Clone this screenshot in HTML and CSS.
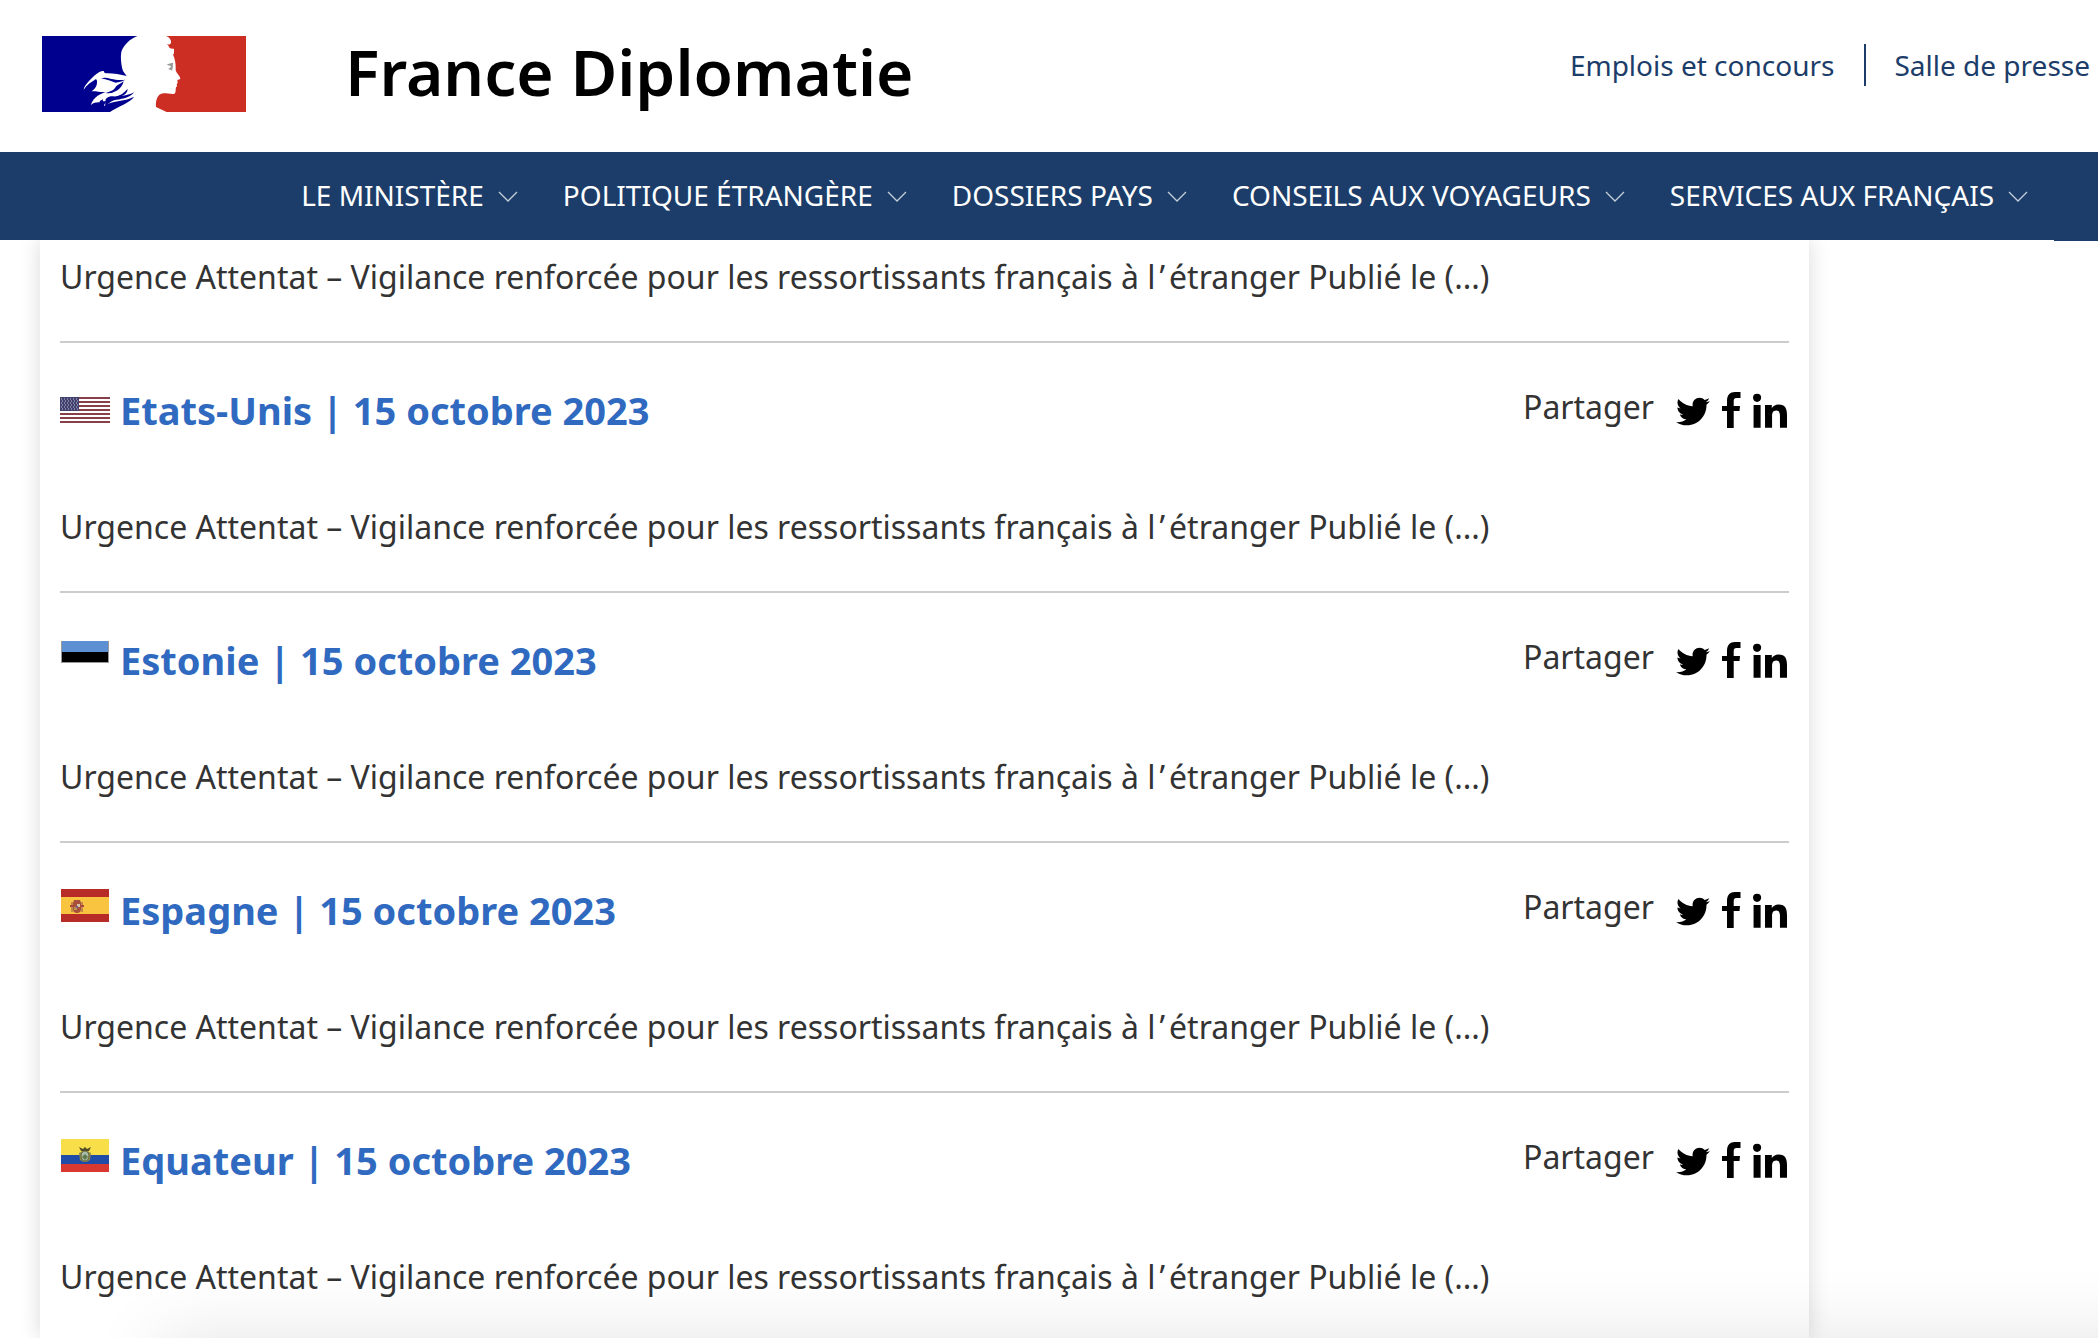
FILE: index.html
```html
<!DOCTYPE html>
<html lang="fr">
<head>
<meta charset="utf-8">
<meta name="viewport" content="width=device-width, initial-scale=1">
<title>France Diplomatie</title>
<link rel="stylesheet" href="styles.css">
</head>
<body>
<svg class="sprite" aria-hidden="true">
  <symbol id="chevron" viewBox="0 0 20 12"><path d="M1 1l9 9 9-9" fill="none" stroke="currentColor" stroke-width="1.3"/></symbol>
  <symbol id="twitter" viewBox="0 -40 512 544"><path d="M459.37 151.716c.325 4.548.325 9.097.325 13.645 0 138.72-105.583 298.558-298.558 298.558-59.452 0-114.68-17.219-161.137-47.106 8.447.974 16.568 1.299 25.34 1.299 49.055 0 94.213-16.568 130.274-44.832-46.132-.975-84.792-31.188-98.112-72.772 6.498.974 12.995 1.624 19.818 1.624 9.421 0 18.843-1.3 27.614-3.573-48.081-9.747-84.143-51.98-84.143-102.985v-1.299c13.969 7.797 30.214 12.67 47.431 13.319-28.264-18.843-46.781-51.005-46.781-87.391 0-19.492 5.197-37.36 14.294-52.954 51.655 63.675 129.3 105.258 216.365 109.807-1.624-7.797-2.599-15.918-2.599-24.04 0-57.828 46.782-104.934 104.934-104.934 30.213 0 57.502 12.67 76.67 33.137 23.715-4.548 46.456-13.32 66.599-25.34-7.798 24.366-24.366 44.833-46.132 57.827 21.117-2.273 41.584-8.122 60.426-16.243-14.292 20.791-32.161 39.308-52.628 54.253z"/></symbol>
  <symbol id="facebook" viewBox="0 0 19 36"><path d="M5 36V19H0v-5h5V9C5 3 8 0 13 0h5.500v6H14.500c-2 0-2.800 1-2.800 3v5H18l-.5 5h-5.800v17z"/></symbol>
  <symbol id="linkedin" viewBox="0 -22 448 474"><path d="M100.280 448H7.400V148.900h92.880zM53.790 108.100C24.090 108.100 0 83.500 0 53.800a53.790 53.790 0 0 1 107.580 0c0 29.700-24.100 54.300-53.790 54.300zM447.900 448h-92.680V302.400c0-34.700-.7-79.200-48.290-79.200-48.290 0-55.690 37.700-55.690 76.700V448h-92.780V148.900h89.080v40.800h1.300c12.400-23.500 42.690-48.300 87.880-48.300 94 0 111.280 61.900 111.280 142.300V448z"/></symbol>
</svg>

<header class="site-header">
  <div class="masthead">
    <a class="brand" href="#">
      <svg class="logo" viewBox="0 0 612 228" aria-hidden="true">
        <path fill="#00008f" d="M0 0h330v228H0z"/>
        <path fill="#cd2e24" d="M330 0h282v228H330z"/>
        <path fill="#fff" d="M286 0C264 8 246 28 240 42c-6 12-3 45 3 63l11 15c-20-5-45-9-62-8-8-2-6-7-6-7-8-1-18 3-31 16-16 16-28 28-30 40 9-14 21-22 37-32l3 5c1 14-4 24-17 32 14-2 30 4 44 1-14 7-37 12-46 41 10-9 15-8 27-9-1-6 5-5 10-11-3 11 3 8 14 6-7 6-12 12-11 16 22-18 60-11 90-28-8 16-53 32-72 46h170l-32-15c-2-20 5-40 22-41 12 0 24 3 32 2 7-3 4-14 6-20 5-3 3-5 2-9l3-5-1-8 9-3c1-10-13-17-14-28 1-15-2-32-8-46l3-2V38c-3 0-9 1-13-2-4-5-3-8-9-11 6 1 12 0 13-5 2-8-6-17-15-20z"/>
        <path fill="#00008f" d="M177 127c18-7 36 9 74 4-12 5-20 7-30 9-14-4-26-10-44-13zM190 171c18-6 27-9 31-19 6-7 16-8 24-17-3 14-12 27-31 34-7 3-12 3-24 2zM191 190c14-15 24-5 38-11 14-4 18-12 28-20-1 12-8 17-18 21 10-1 24-4 38-11-16 18-42 21-61 24-9 3-20 12-27 19z"/>
        <path fill="#999" d="M374 84c7 0 12-3 20-4-2 7-1 16-4 24-3-2-7-4-12-5 5-2 8-5 9-9-5 0-9-2-13-6z"/>
      </svg>
      <span class="brand-name">France Diplomatie</span>
    </a>
    <nav class="quick-links" aria-label="Accès rapides">
      <a href="#">Emplois et concours</a>
      <a href="#">Salle de presse</a>
    </nav>
  </div>
  <nav class="main-nav" aria-label="Menu principal">
    <button type="button">LE MINISTÈRE<svg class="chevron"><use href="#chevron"/></svg></button>
    <button type="button">POLITIQUE ÉTRANGÈRE<svg class="chevron"><use href="#chevron"/></svg></button>
    <button type="button">DOSSIERS PAYS<svg class="chevron"><use href="#chevron"/></svg></button>
    <button type="button">CONSEILS AUX VOYAGEURS<svg class="chevron"><use href="#chevron"/></svg></button>
    <button type="button">SERVICES AUX FRANÇAIS<svg class="chevron"><use href="#chevron"/></svg></button>
    <span class="nav-end"></span>
  </nav>
</header>

<main class="card">
  <article class="alert alert-continued">
    <p>Urgence Attentat – Vigilance renforcée pour les ressortissants français à l<span class="apostrophe">’</span>étranger Publié le (...)</p>
  </article>

  <article class="alert">
    <div class="alert-head">
      <h2><a href="#"><svg class="flag" viewBox="0 0 50 36" aria-hidden="true">
        <path fill="#fff" d="M0 10h50v26H0z"/>
        <path stroke="#873f4a" stroke-width="2" d="M0 11h50M0 15h50M0 19h50M0 23h50M0 27h50M0 31h50M0 35h50"/>
        <path fill="#41406f" d="M0 10h19v14H0z"/>
        <path stroke="#c3c3d6" stroke-dasharray="1 2" d="M1 12h17M2 14h16M1 16h17M2 18h16M1 20h17M2 22h16"/>
      </svg>Etats-Unis | 15 octobre 2023</a></h2>
      <div class="share">
        <span>Partager</span>
        <a href="#" aria-label="Twitter"><svg class="icon-tw"><use href="#twitter"/></svg></a>
        <a href="#" aria-label="Facebook"><svg class="icon-fb"><use href="#facebook"/></svg></a>
        <a href="#" aria-label="LinkedIn"><svg class="icon-in"><use href="#linkedin"/></svg></a>
      </div>
    </div>
    <p>Urgence Attentat – Vigilance renforcée pour les ressortissants français à l<span class="apostrophe">’</span>étranger Publié le (...)</p>
  </article>

  <article class="alert">
    <div class="alert-head">
      <h2><a href="#"><svg class="flag" viewBox="0 0 50 36" aria-hidden="true">
        <path fill="#5d8fd3" d="M1 4h48v11H1z"/>
        <path fill="#000" d="M1 15h48v10H1z"/>
        <path fill="none" stroke="#999" d="M1 25.500h48M1.500 4v21M48.500 4v21"/>
      </svg>Estonie | 15 octobre 2023</a></h2>
      <div class="share">
        <span>Partager</span>
        <a href="#" aria-label="Twitter"><svg class="icon-tw"><use href="#twitter"/></svg></a>
        <a href="#" aria-label="Facebook"><svg class="icon-fb"><use href="#facebook"/></svg></a>
        <a href="#" aria-label="LinkedIn"><svg class="icon-in"><use href="#linkedin"/></svg></a>
      </div>
    </div>
    <p>Urgence Attentat – Vigilance renforcée pour les ressortissants français à l<span class="apostrophe">’</span>étranger Publié le (...)</p>
  </article>

  <article class="alert">
    <div class="alert-head">
      <h2><a href="#"><svg class="flag" viewBox="0 0 50 36" aria-hidden="true">
        <path fill="#b72c27" d="M1 2h48v33H1z"/>
        <path fill="#f9c440" d="M1 10h48v17H1z"/>
        <path fill="#c08a4a" d="M11 15h2v10h-2zM21 15h2v10h-2z"/>
        <path fill="#a8503a" d="M14 13h6l1 3h-8zM13 16h8v6q0 4-4 4t-4-4z"/>
        <path fill="#d8c4a8" d="M17 17h3v3h-3z"/>
        <path fill="#b9905a" d="M14 20h3v3h-3z"/>
        <path fill="#76608a" d="M16 19h2v2h-2z"/>
        <path fill="#b0473a" d="M10 18h3v2h-3zM21 18h3v2h-3z"/>
      </svg>Espagne | 15 octobre 2023</a></h2>
      <div class="share">
        <span>Partager</span>
        <a href="#" aria-label="Twitter"><svg class="icon-tw"><use href="#twitter"/></svg></a>
        <a href="#" aria-label="Facebook"><svg class="icon-fb"><use href="#facebook"/></svg></a>
        <a href="#" aria-label="LinkedIn"><svg class="icon-in"><use href="#linkedin"/></svg></a>
      </div>
    </div>
    <p>Urgence Attentat – Vigilance renforcée pour les ressortissants français à l<span class="apostrophe">’</span>étranger Publié le (...)</p>
  </article>

  <article class="alert">
    <div class="alert-head">
      <h2><a href="#"><svg class="flag" viewBox="0 0 50 36" aria-hidden="true">
        <path fill="#f8df4a" d="M1 2h48v16H1z"/>
        <path fill="#1f4ca6" d="M1 18h48v9H1z"/>
        <path fill="#d93832" d="M1 27h48v8H1z"/>
        <path fill="#4e4a2c" d="M19 10l4 2 2-2 2 2 4-2-2 4-3 1h-2l-3-1z"/>
        <path fill="#8a8a50" d="M19 16q6-4 12 0l-1 7q-5 4-10 0z"/>
        <ellipse cx="25" cy="19" rx="4" ry="5" fill="#a8bfae" stroke="#6a6232"/>
        <path fill="#5f7a4c" d="M22 20l3-3 3 3-3 3z"/>
      </svg>Equateur | 15 octobre 2023</a></h2>
      <div class="share">
        <span>Partager</span>
        <a href="#" aria-label="Twitter"><svg class="icon-tw"><use href="#twitter"/></svg></a>
        <a href="#" aria-label="Facebook"><svg class="icon-fb"><use href="#facebook"/></svg></a>
        <a href="#" aria-label="LinkedIn"><svg class="icon-in"><use href="#linkedin"/></svg></a>
      </div>
    </div>
    <p>Urgence Attentat – Vigilance renforcée pour les ressortissants français à l<span class="apostrophe">’</span>étranger Publié le (...)</p>
  </article>
</main>
</body>
</html>
```

FILE: styles.css
```css
* {
  box-sizing: border-box;
}

body {
  margin: 0;
  min-height: 100vh;
  display: flex;
  flex-direction: column;
  background: #fff;
  color: #333;
  font-family: "Noto Sans", "Open Sans", sans-serif;
  font-size: 32px;
}

/* soft shade rising from the bottom edge of the window */
body::after {
  content: "";
  position: fixed;
  top: 100%;
  left: 160px;
  right: -100px;
  height: 100px;
  box-shadow: 0 0 76px rgba(0, 0, 0, 0.11);
  pointer-events: none;
}

a {
  color: inherit;
  text-decoration: none;
}

.sprite {
  position: absolute;
  width: 0;
  height: 0;
}

.site-header {
  position: sticky;
  top: 0;
  z-index: 1;
  background: #fff;
}

.masthead {
  display: flex;
  justify-content: space-between;
  height: 152px;
  padding: 36px 8px 0 42px;
}

.brand {
  display: flex;
  gap: 99px;
  height: 76px;
  color: #000;
}

.logo {
  width: 204px;
  height: 76px;
}

.brand-name {
  font-size: 64px;
  font-weight: 600;
  line-height: 72px;
}

.quick-links {
  display: flex;
  margin-top: 8px;
  color: #1c3d69;
  font-size: 28px;
  line-height: 42px;
  height: 42px;
}

.quick-links a + a {
  margin-left: 30px;
  padding-left: 28px;
  border-left: 2px solid #1c3d69;
}

.main-nav {
  display: flex;
  justify-content: flex-end;
  gap: 45px;
  height: 88px;
  background: #1c3d69;
}

.main-nav button {
  display: flex;
  align-items: center;
  gap: 14px;
  padding: 0 0 2px;
  border: 0;
  background: none;
  color: #fff;
  font: inherit;
  font-size: 28px;
  white-space: nowrap;
}

.chevron {
  width: 20px;
  height: 12px;
  margin-top: 4px;
  color: #c5cfdc;
}

.nav-end {
  width: 44px;
  height: 89px;
  margin-left: -19px;
  background: #1c3d69;
}

.card {
  flex: 1;
  margin: 0 289px 0 40px;
  padding: 0 20px;
  box-shadow: 0 0 20px rgba(0, 0, 0, 0.15);
}

.alert {
  padding: 42px 0 40px;
  border-bottom: 2px solid #ccc;
}

.alert-continued {
  padding-top: 13px;
}

.alert:last-child {
  padding-bottom: 36px;
  border-bottom: 0;
}

.alert p {
  margin: 0;
  line-height: 48px;
}

.apostrophe {
  margin: 0 4px;
}

.alert-head {
  display: flex;
  justify-content: space-between;
  margin-bottom: 68px;
}

.alert h2 {
  margin: 0;
  color: #306ac0;
  font-size: 38px;
  line-height: 50px;
}

.alert h2 a {
  display: flex;
  gap: 10px;
}

.flag {
  width: 50px;
  height: 36px;
  margin-top: 2px;
}

.share {
  display: flex;
  gap: 12px;
  padding-right: 2px;
  line-height: 44px;
}

.share span {
  margin-right: 10px;
}

.share a {
  padding-top: 7px;
}

.share svg {
  display: block;
  height: 36px;
  fill: #000;
}

.icon-tw {
  width: 34px;
}

.icon-fb {
  width: 19px;
}

.icon-in {
  width: 34px;
}
```
